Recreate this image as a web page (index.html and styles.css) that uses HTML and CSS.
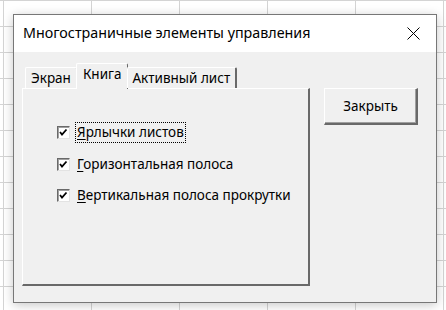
FILE: index.html
```html
<!DOCTYPE html>
<html lang="ru">
<head>
    <meta charset="UTF-8">
    <title>Многостраничные элементы управления</title>
    <link rel="stylesheet" href="styles.css">
</head>
<body>
    <div class="dialog">
        <div class="titlebar">
            <span class="title">Многостраничные элементы управления</span>
            <svg class="close-x" width="13" height="13" viewBox="0 0 13 13">
                <path d="M0.5 0.5 L12.5 12.5 M12.5 0.5 L0.5 12.5" stroke="#000" stroke-width="1" fill="none"/>
            </svg>
        </div>
        <div class="dlg-body">
            <div class="tabctl">
                <div class="tabs">
                    <div class="tab">Экран</div>
                    <div class="tab active">Книга</div>
                    <div class="tab last">Активный лист</div>
                </div>
                <div class="panel">
                    <label class="check focused">
                        <span class="box"><svg width="9" height="9" viewBox="0 0 9 9"><path d="M1 4 L3 6.5 L7.5 1.5" stroke="#000" stroke-width="1.8" fill="none"/></svg></span>
                        <span class="lbl"><u>Я</u>рлычки листов</span>
                    </label>
                    <label class="check">
                        <span class="box"><svg width="9" height="9" viewBox="0 0 9 9"><path d="M1 4 L3 6.5 L7.5 1.5" stroke="#000" stroke-width="1.8" fill="none"/></svg></span>
                        <span class="lbl"><u>Г</u>оризонтальная полоса</span>
                    </label>
                    <label class="check">
                        <span class="box"><svg width="9" height="9" viewBox="0 0 9 9"><path d="M1 4 L3 6.5 L7.5 1.5" stroke="#000" stroke-width="1.8" fill="none"/></svg></span>
                        <span class="lbl"><u>В</u>ертикальная полоса прокрутки</span>
                    </label>
                </div>
            </div>
            <div class="side">
                <button class="btn">Закрыть</button>
            </div>
        </div>
    </div>
</body>
</html>
```

FILE: styles.css
```css
* {
    margin: 0;
    padding: 0;
    box-sizing: border-box;
}
html, body {
    width: 446px;
    height: 310px;
    overflow: hidden;
}
body {
    font-family: "Noto Sans", "Open Sans", sans-serif;
    background-color: #fff;
    background-image:
        linear-gradient(to right, #d4d4d4 1px, transparent 1px),
        linear-gradient(to bottom, #d4d4d4 1px, transparent 1px);
    background-size: 88px 26px;
    background-position: 3px 0;
    padding-top: 14px;
    padding-left: 13px;
}
.dialog {
    width: 424px;
    height: 289px;
    border: 1px solid #777;
    background: #f0f0f0;
    box-shadow: 0 2px 10px rgba(0, 0, 0, 0.22);
    display: flex;
    flex-direction: column;
}
.titlebar {
    height: 37px;
    background: #fff;
    display: flex;
    align-items: center;
    justify-content: space-between;
    padding-left: 9px;
    padding-right: 16px;
}
.title {
    font-size: 14.3px;
    color: #000;
    position: relative;
    top: -1px;
}
.close-x {
    display: block;
}
.dlg-body {
    flex: 1;
    display: flex;
    padding: 11px 0 0 8px;
}
.tabctl {
    width: 288px;
    display: flex;
    flex-direction: column;
}
.tabs {
    display: flex;
    align-items: flex-end;
    height: 25px;
    padding-left: 3px;
    position: relative;
    z-index: 1;
}
.tab {
    font-size: 13.5px;
    height: 21px;
    line-height: 20px;
    padding: 0 5px;
    background: #f0f0f0;
    border-top: 1px solid #fff;
    border-left: 1px solid #fff;
    border-right: 1px solid #a0a0a0;
    border-radius: 2px 2px 0 0;
    color: #000;
}
.tab.active {
    height: 26px;
    line-height: 20px;
    margin-bottom: -1px;
    padding: 0 6px;
    margin-left: -1px;
    margin-right: -1px;
    border-right: 1px solid #696969;
}
.tab.last {
    padding: 0 5px 0 4px;
    border-right: 2px solid #696969;
}
.panel {
    height: 198px;
    border-top: 1px solid #fff;
    border-left: 1px solid #fff;
    border-right: 2px solid #696969;
    border-bottom: 2px solid #696969;
    padding: 33px 0 0 34px;
    display: flex;
    flex-direction: column;
    gap: 10.5px;
}
.check {
    display: flex;
    align-items: center;
    gap: 5px;
    font-size: 13.5px;
    height: 21px;
    color: #000;
}
.box {
    width: 13px;
    height: 13px;
    background: #fff;
    border-top: 1px solid #696969;
    border-left: 1px solid #696969;
    border-right: 1px solid #e3e3e3;
    border-bottom: 1px solid #e3e3e3;
    box-shadow: inset 1px 1px 0 #a0a0a0;
    display: flex;
    align-items: center;
    justify-content: center;
}
.box svg {
    display: block;
}
.lbl {
    padding: 0 1px;
    line-height: 19px;
    border: 1px dotted transparent;
}
.check.focused .lbl {
    border-color: #000;
}
.lbl u {
    text-decoration-thickness: 1px;
    text-underline-offset: 2px;
}
.side {
    padding: 25px 0 0 14px;
}
.btn {
    width: 94px;
    height: 37px;
    font-family: inherit;
    font-size: 13.5px;
    color: #000;
    background: #f0f0f0;
    border-top: 1px solid #fff;
    border-left: 1px solid #fff;
    border-right: 2px solid #696969;
    border-bottom: 2px solid #696969;
    box-shadow: inset -1px -1px 0 #a0a0a0;
}
```
